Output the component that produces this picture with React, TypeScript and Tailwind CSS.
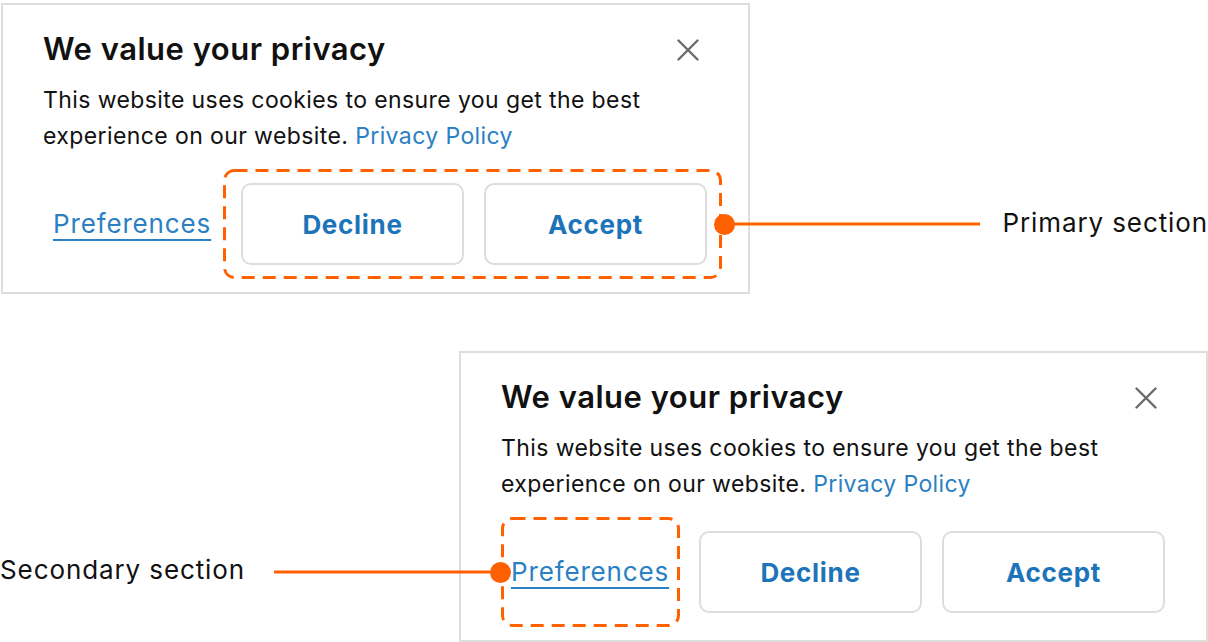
import React from 'react';

const ORANGE = '#ff6000';

// Dashed outline used to mark a section of the banner
const DashedFrame: React.FC<{ w: number; h: number; className: string }> = ({ w, h, className }) => (
  <svg
    width={w}
    height={h}
    viewBox={`0 0 ${w} ${h}`}
    className={`pointer-events-none absolute ${className}`}
  >
    <rect
      x={1.5}
      y={1.5}
      width={w - 3}
      height={h - 3}
      rx={10}
      fill="none"
      stroke={ORANGE}
      strokeWidth={3}
      strokeDasharray="13 8"
    />
  </svg>
);

const CloseIcon: React.FC = () => (
  <svg width="22" height="22" viewBox="0 0 22 22" fill="none">
    <path d="M1.5 1.5 L20.5 20.5 M20.5 1.5 L1.5 20.5" stroke="#6b6b6b" strokeWidth="2.4" strokeLinecap="round" />
  </svg>
);

const Banner: React.FC<{ mark: 'primary' | 'secondary' }> = ({ mark }) => {
  return (
    <div className="relative w-[749px] h-[291px] shrink-0 border-2 border-[#dddddd] bg-white pl-[40px] pr-[40px] pt-[26px]">
      {/* Header */}
      <div className="flex items-center justify-between">
        <h2 className="text-[31px] leading-[36px] font-semibold text-[#111] tracking-[0.5px]">
          We value your privacy
        </h2>
        <button className="mr-[8px] mt-[2px] flex h-[24px] w-[24px] items-center justify-center">
          <CloseIcon />
        </button>
      </div>

      <p className="mt-[15px] text-[23px] leading-[36px] text-[#111] tracking-[0.4px]">
        This website uses cookies to ensure you get the best experience on our website.{' '}
        <a href="#" className="text-[#2a80c3]">Privacy Policy</a>
      </p>

      {/* Actions */}
      <div className="mt-[29px] flex items-center justify-between">
        <div className="relative ml-[10px] flex h-[82px] items-center">
          <a href="#" className="text-[26px] leading-[30px] tracking-[0.85px] text-[#2a80c3] underline decoration-[2px] underline-offset-[6px]">
            Preferences
          </a>
          {mark === 'secondary' && (
            <>
              <DashedFrame w={179} h={110} className="left-[-10px] top-[-14px]" />
              <div className="absolute right-[calc(100%+10px)] top-1/2 h-[3px] w-[227px] -translate-y-1/2 bg-[#ff6000]">
                <div className="absolute right-[-10px] top-1/2 h-[21px] w-[21px] -translate-y-1/2 rounded-full bg-[#ff6000]" />
              </div>
            </>
          )}
        </div>

        <div className="relative mr-[1px] flex gap-[20px]">
          <button className="flex h-[82px] w-[223px] items-center justify-center rounded-[10px] border-2 border-[#dddddd] bg-white text-[26px] font-bold tracking-[0.7px] text-[#1d74b9]">
            Decline
          </button>
          <button className="flex h-[82px] w-[223px] items-center justify-center rounded-[10px] border-2 border-[#dddddd] bg-white text-[26px] font-bold tracking-[0.7px] text-[#1d74b9]">
            Accept
          </button>
          {mark === 'primary' && (
            <>
              <DashedFrame w={499} h={110} className="left-[-18px] top-[-14px]" />
              <div className="absolute left-[calc(100%+17px)] top-1/2 h-[3px] w-[256px] -translate-y-1/2 bg-[#ff6000]">
                <div className="absolute left-[-10px] top-1/2 h-[21px] w-[21px] -translate-y-1/2 rounded-full bg-[#ff6000]" />
              </div>
            </>
          )}
        </div>
      </div>
    </div>
  );
};

const App: React.FC = () => {
  return (
    <div className="h-[642px] w-[1208px] overflow-hidden bg-white font-['Inter',sans-serif] text-[#111]">
      {/* Primary section example */}
      <div className="flex pl-[1px] pt-[3px]">
        <Banner mark="primary" />
        <span className="ml-auto mt-[205px] text-[26px] leading-[30px] tracking-[0.9px] text-[#111]">Primary section</span>
      </div>

      {/* Secondary section example */}
      <div className="mt-[57px] flex">
        <span className="mt-[204px] text-[26px] leading-[30px] tracking-[0.9px] text-[#111]">Secondary section</span>
        <div className="ml-auto">
          <Banner mark="secondary" />
        </div>
      </div>
    </div>
  );
};

export default App;
